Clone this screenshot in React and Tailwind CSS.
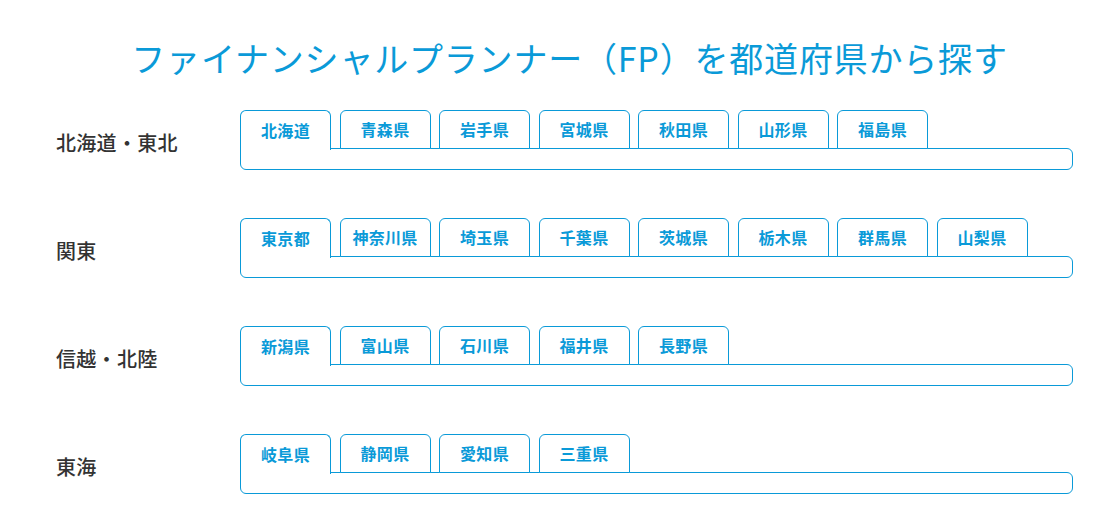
const regions = [
  { name: '北海道・東北', prefs: ['北海道', '青森県', '岩手県', '宮城県', '秋田県', '山形県', '福島県'] },
  { name: '関東', prefs: ['東京都', '神奈川県', '埼玉県', '千葉県', '茨城県', '栃木県', '群馬県', '山梨県'] },
  { name: '信越・北陸', prefs: ['新潟県', '富山県', '石川県', '福井県', '長野県'] },
  { name: '東海', prefs: ['岐阜県', '静岡県', '愛知県', '三重県'] },
];

function RegionRow({ region }) {
  return (
    <div className="flex items-center">
      <div className="w-[184px] shrink-0 text-[20px] font-medium text-[#333] pt-[5px] tracking-[0.3px]">{region.name}</div>
      <div className="flex-1">
        <div className="flex items-end gap-[8.5px]">
          {region.prefs.map((p, i) => (
            <button
              key={p}
              className={
                'w-[91px] rounded-t-[6px] border border-[#0a9ad8] bg-white text-[16px] font-bold text-[#0a9ad8] tracking-[0.3px] ' +
                (i === 0 ? 'relative z-10 h-[40px] border-b-0 -mb-px pb-[2px]' : 'h-[39px] pb-[1px]')
              }
            >
              {p}
            </button>
          ))}
        </div>
        <div className="h-[22px] -mt-px border border-[#0a9ad8] rounded-[6px] rounded-tl-none" />
      </div>
    </div>
  );
}

export default function App() {
  return (
    <div className="w-[1116px] h-[517px] bg-white pl-[56px] pr-[43px] font-['Noto_Sans_CJK_JP','Noto_Sans',sans-serif]">
      <h1 className="pt-[34px] pl-[10px] text-center text-[34px] leading-[48px] text-[#0a9ad8] tracking-[0.8px]">
        ファイナンシャルプランナー（FP）を都道府県から探す
      </h1>
      <div className="mt-[28px] flex flex-col gap-[48px]">
        {regions.map((r) => (
          <RegionRow key={r.name} region={r} />
        ))}
      </div>
    </div>
  );
}
